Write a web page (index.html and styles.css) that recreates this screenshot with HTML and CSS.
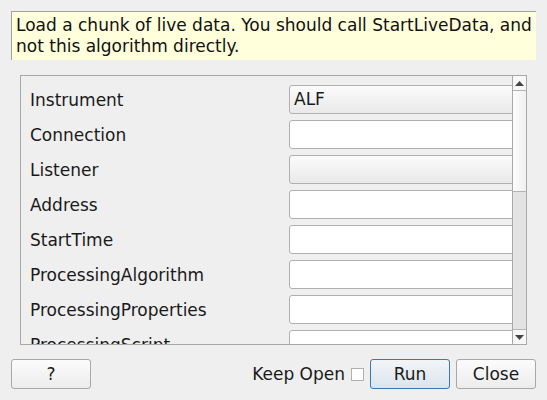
FILE: index.html
```html
<!DOCTYPE html>
<html>
<head>
<meta charset="utf-8">
<link rel="stylesheet" href="styles.css">
</head>
<body>
<div class="dialog">
  <div class="desc">Load a chunk of live data. You should call StartLiveData, and<br>not this algorithm directly.</div>
  <div class="scroll">
    <div class="content">
      <div class="row"><span class="label">Instrument</span><div class="combo">ALF</div></div>
      <div class="row"><span class="label">Connection</span><div class="edit"></div></div>
      <div class="row"><span class="label">Listener</span><div class="combo"></div></div>
      <div class="row"><span class="label">Address</span><div class="edit"></div></div>
      <div class="row"><span class="label">StartTime</span><div class="edit"></div></div>
      <div class="row"><span class="label">ProcessingAlgorithm</span><div class="edit"></div></div>
      <div class="row"><span class="label">ProcessingProperties</span><div class="edit"></div></div>
      <div class="row"><span class="label">ProcessingScript</span><div class="edit"></div></div>
    </div>
    <div class="vbar">
      <div class="arrow up"><svg width="9" height="5" viewBox="0 0 9 5"><path d="M0 5 L4.5 0 L9 5 Z" fill="#444"/></svg></div>
      <div class="thumb"></div>
      <div class="track"></div>
      <div class="arrow down"><svg width="9" height="5" viewBox="0 0 9 5"><path d="M0 0 L4.5 5 L9 0 Z" fill="#444"/></svg></div>
    </div>
  </div>
  <div class="buttons">
    <button class="btn">?</button>
    <div class="spacer"></div>
    <label class="keep">Keep Open <span class="check"></span></label>
    <button class="btn run">Run</button>
    <button class="btn">Close</button>
  </div>
</div>
</body>
</html>
```
FILE: styles.css
```css
html, body {
  margin: 0;
  padding: 0;
  background: #efefef;
  width: 547px;
  height: 400px;
  overflow: hidden;
}
body {
  font-family: "DejaVu Sans", sans-serif;
  font-size: 17px;
  color: #1a1a1a;
}
.dialog {
  display: flex;
  flex-direction: column;
  padding: 11px 11px 0 11px;
}
.desc {
  border-top: 1px solid #a0a0a0;
  border-left: 1px solid #a0a0a0;
  background: #ffffdc;
  padding: 3px 0 0 4px;
  box-sizing: border-box;
  height: 49px;
  line-height: 21px;
  white-space: nowrap;
  color: #111;
}
.scroll {
  margin: 15px 9px 0 9px;
  height: 270px;
  box-sizing: border-box;
  border: 1px solid #a8a8a8;
  display: flex;
  overflow: hidden;
}
.content {
  flex: 1;
  overflow: hidden;
  padding: 9px 0 0 9px;
  display: flex;
  flex-direction: column;
  gap: 6px;
}
.row {
  display: flex;
  align-items: center;
  height: 29px;
  flex: none;
}
.label {
  width: 259px;
  flex: none;
  white-space: nowrap;
}
.combo, .edit {
  flex: none;
  width: 250px;
  height: 29px;
  box-sizing: border-box;
  border: 1px solid #b0b0b0;
  border-radius: 3px;
  padding-left: 4px;
  line-height: 27px;
}
.edit {
  background: #ffffff;
}
.combo {
  background: linear-gradient(#fbfbfb, #e9e9e9);
}
.vbar {
  width: 13px;
  flex: none;
  border-left: 1px solid #a8a8a8;
  display: flex;
  flex-direction: column;
}
.arrow {
  height: 14px;
  flex: none;
  display: flex;
  align-items: center;
  justify-content: center;
  background: #f7f7f7;
}
.arrow.up {
  border-bottom: 1px solid #b4b4b4;
}
.arrow.down {
  border-top: 1px solid #b4b4b4;
}
.thumb {
  height: 100px;
  flex: none;
  background: linear-gradient(90deg, #fdfdfd, #f0f0f0);
  border-bottom: 1px solid #b4b4b4;
}
.track {
  flex: 1;
  background: #e3e3e3;
}
.buttons {
  display: flex;
  align-items: center;
  margin-top: 14px;
  height: 30px;
}
.spacer {
  flex: 1;
}
.btn {
  width: 80px;
  height: 30px;
  box-sizing: border-box;
  font-family: "DejaVu Sans", sans-serif;
  font-size: 17px;
  color: #1a1a1a;
  border: 1px solid #a8a8a8;
  border-radius: 3px;
  background: linear-gradient(#fcfcfc, #ececec);
  padding: 0;
}
.btn + .btn {
  margin-left: 6px;
}
.run {
  border-color: #3b78b4;
  background: linear-gradient(#f2f5f8, #dbe4ee);
}
.keep {
  display: flex;
  align-items: center;
  gap: 6px;
  margin-right: 6px;
}
.check {
  width: 13px;
  height: 13px;
  box-sizing: border-box;
  border: 1px solid #b0b0b0;
  background: #fff;
}
```
